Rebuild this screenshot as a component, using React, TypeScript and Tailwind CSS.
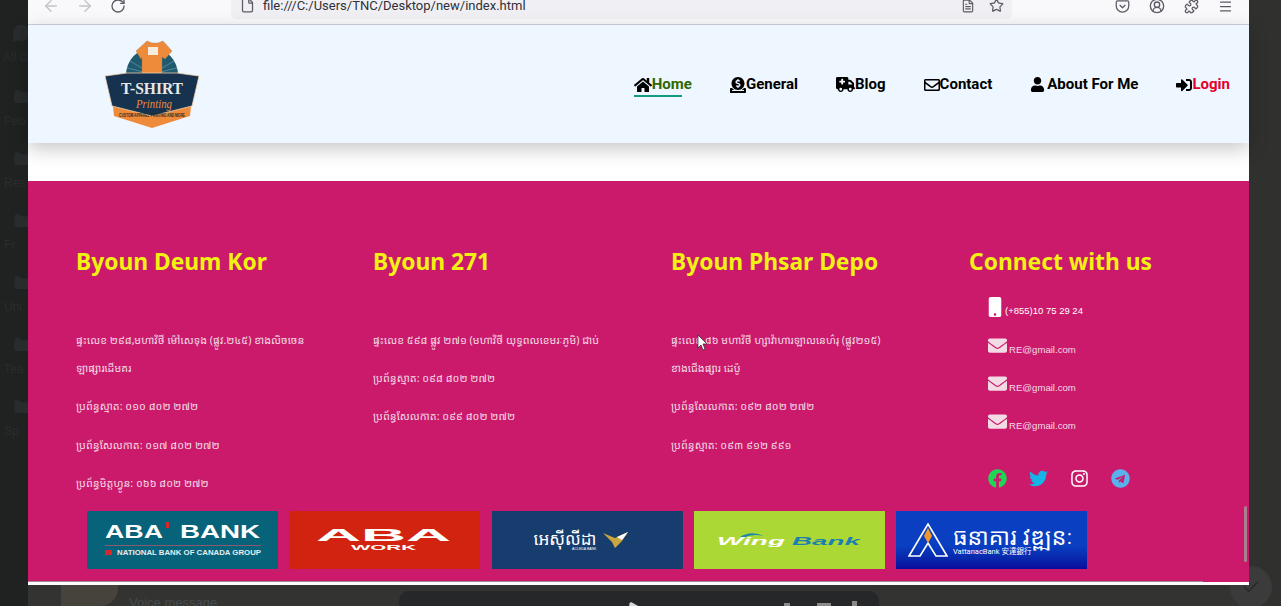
import React from "react";
import { ArrowLeft, ArrowRight, RotateCw, File, FileText, Star, Pocket, CircleUserRound, Puzzle, Menu, Folder, MessageCircle, Play, Check } from "lucide-react";
import { FaHome, FaDonate, FaRegEnvelope, FaUser, FaSignInAlt, FaMobile, FaEnvelope, FaFacebook, FaTwitter, FaInstagram, FaTelegram } from "react-icons/fa";
import { FaTruckMedical } from "react-icons/fa6";

const navItems = [
  { label: "General", icon: <FaDonate size={16} /> },
  { label: "Blog", icon: <FaTruckMedical size={19} /> },
  { label: "Contact", icon: <FaRegEnvelope size={16} /> },
  { label: "About For Me", icon: <FaUser size={15} className="mr-[2px]" /> },
];

const sideItems = ["Peo", "Res", "Fr", "Uni", "Tea", "Sp"];

const Logo = () => (
  <svg viewBox="0 0 96 90" className="w-[96px] h-[90px] shrink-0">
    <path d="M22 36 A26 27 0 0 1 74 36Z" fill="#1f5a6e" />
    <path d="M48 35 L26 22 M48 35 L23 29 M48 35 L70 22 M48 35 L73 29" stroke="#5d93a3" strokeWidth="0.8" />
    <path d="M32 12 L43 2 L48 4 L54 4 L59 2 L68 12 L61 20 L58 18 L58 35 L38 35 L38 18 L37 20Z" fill="#ee8b3a" stroke="#a87f5c" strokeWidth="0.4" />
    <rect x="44" y="8" width="10" height="8" fill="#f5ece0" />
    <path d="M9 67 L87 67 L86 77 L48 89 L10 77Z" fill="#ee8b3a" />
    <path d="M1 37 L23 34 L73 34 L95 37 L88 67 L48 77 L8 67Z" fill="#17324f" stroke="#f0cfa8" strokeWidth="0.8" />
    <text x="17" y="55" fontFamily="Liberation Serif" fontWeight="700" fontSize="17.5" fill="#e8e8e4" textLength="62" lengthAdjust="spacingAndGlyphs">T-SHIRT</text>
    <text x="32" y="69" fontFamily="Liberation Serif" fontStyle="italic" fontSize="13" fill="#ee8b3a" textLength="36" lengthAdjust="spacingAndGlyphs">Printing</text>
    <text x="15" y="77.5" fontFamily="Liberation Sans" fontWeight="700" fontSize="4.5" fill="#2b2a28" textLength="66" lengthAdjust="spacingAndGlyphs">CUSTOM APPAREL PRINTING AND MORE</text>
  </svg>
);

const FooterColumn = ({ title, lines }: { title: string; lines: string[] }) => (
  <div>
    <h3 className="font-['Noto_Sans','Open_Sans',sans-serif] font-bold text-[22.8px] leading-[32px] text-[#f2f212] mb-[48px]">{title}</h3>
    {lines.map((line) => (
      <p key={line} className="font-['Noto_Sans_Khmer','Khmer_OS','DejaVu_Sans',sans-serif] text-[10.8px] leading-[28.2px] mb-[10px] text-[#f3dbe6] whitespace-pre-line">
        {line}
      </p>
    ))}
  </div>
);

const App = () => {
  return (
    <div className="relative w-[1281px] h-[606px] overflow-hidden flex bg-[#30312e] font-['Liberation_Sans',sans-serif]">
      <aside className="w-[28px] h-[606px] shrink-0 bg-[#202222] overflow-hidden text-[#292c2c] text-[12px]">
        <div className="h-[71px] pt-[23px] pl-[11px]">
          <MessageCircle size={20} fill="#292c2c" strokeWidth={0} />
          <p className="-ml-[8px] mt-[5px] whitespace-nowrap">All chats</p>
        </div>
        {sideItems.map((item) => (
          <div key={item} className="h-[62px] pt-[17px] pl-[13px] whitespace-nowrap">
            <Folder size={18} fill="#292c2c" strokeWidth={0} />
            <p className="-ml-[9px] mt-[6px]">{item}</p>
          </div>
        ))}
      </aside>

      <div className="w-[1221px] h-[606px] shrink-0 flex flex-col">
        <div className="h-[25px] shrink-0 bg-[#f9f9fb] border-b border-[#cfcfd8] flex items-start overflow-hidden text-[#5b5b66]">
          <div className="flex items-center -mt-[3px] h-[18px] pl-[14px] gap-[16px]">
            <ArrowLeft size={18} className="text-[#c4c4c9]" />
            <ArrowRight size={18} className="text-[#c4c4c9]" />
            <RotateCw size={16} />
          </div>
          <div className="ml-[105px] -mt-[8px] w-[781px] h-[27px] shrink-0 rounded-[5px] bg-[#f0f0f4] flex items-center pl-[9px] pr-[8px] gap-[8px]">
            <File size={15} />
            <span className="font-['Roboto',sans-serif] text-[13px] text-[#2f2f38] ml-[0px]">file:///C:/Users/TNC/Desktop/new/index.html</span>
            <FileText size={14} className="ml-auto mr-[6px]" />
            <Star size={15} />
          </div>
          <div className="flex items-center -mt-[3px] h-[18px] ml-[103px] gap-[19px]">
            <Pocket size={15} />
            <CircleUserRound size={16} />
            <Puzzle size={15} />
            <Menu size={15} />
          </div>
        </div>

        <header className="h-[118px] shrink-0 bg-[#eef6ff] flex items-center pl-[76px] pr-[19px] shadow-[0_6px_18px_rgba(0,0,0,0.22)] relative">
          <Logo />
          <nav className="ml-auto mt-[1px] flex items-center gap-[38px] font-['Roboto',sans-serif] font-bold text-[15px] text-black">
            <a className="relative flex items-center text-[#2f6800]">
              <span className="text-black"><FaHome size={18} /></span>Home
              <span className="absolute left-0 top-[22px] w-[48px] h-[2px] bg-[#159a82]" />
            </a>
            {navItems.map((item) => (
              <a key={item.label} className="flex items-center">
                {item.icon}
                {item.label}
              </a>
            ))}
            <a className="flex items-center text-[#e4002b]">
              <span className="text-black"><FaSignInAlt size={16} /></span>Login
            </a>
          </nav>
        </header>

        <div className="h-[38px] shrink-0 bg-white" />

        <footer className="h-[401px] shrink-0 bg-[#cb1a6b] pt-[65px] relative z-10">
          <div className="h-[265px] pl-[48px] grid grid-cols-[297px_298px_298px_1fr]">
            <FooterColumn
              title="Byoun Deum Kor"
              lines={[
                "ផ្ទះលេខ ២៩៨,មហាវិថី ម៉ៅសេទុង (ផ្លូវ.២៤៥) ខាងលិចចេន\nឡាផ្សារដើមគរ",
                "ប្រព័ន្ធស្មាត: ០១០ ៨០២ ២៧២",
                "ប្រព័ន្ធសែលកាត: ០១៧ ៨០២ ២៧២",
                "ប្រព័ន្ធមិត្តហ្វូន: ០៦៦ ៨០២ ២៧២",
              ]}
            />
            <FooterColumn
              title="Byoun 271"
              lines={[
                "ផ្ទះលេខ ៥៩៨ ផ្លូវ ២៧១ (មហាវិថី យុទ្ធពលខេមរៈភូមិ) ជាប់",
                "ប្រព័ន្ធស្មាត: ០៩៨ ៨០២ ២៧២",
                "ប្រព័ន្ធសែលកាត: ០៩៩ ៨០២ ២៧២",
              ]}
            />
            <FooterColumn
              title="Byoun Phsar Depo"
              lines={[
                "ផ្ទះលេខ ៨៦ មហាវិថី ហ្សាវ៉ាហារឡាលនេហ៌រុ (ផ្លូវ២១៥)\nខាងជើងផ្សារ ដេប៉ូ",
                "ប្រព័ន្ធសែលកាត: ០៩២ ៨០២ ២៧២",
                "ប្រព័ន្ធស្មាត: ០៩៣ ៩១២ ៩៩១",
              ]}
            />
            <div>
              <h3 className="font-['Noto_Sans','Open_Sans',sans-serif] font-bold text-[22.8px] leading-[32px] text-[#f2f212] mb-[14px]">Connect with us</h3>
              <div className="pl-[19px] text-white">
                <div className="h-[38px] flex items-center text-[9.5px]">
                  <FaMobile size={20} className="-ml-[3px] -mt-[8px]" />
                  <span className="mt-[1px]">(+855)10 75 29 24</span>
                </div>
                {[0, 1, 2].map((i) => (
                  <div key={i} className="h-[38px] flex items-center gap-[2px] text-[9.6px] text-[#f3dbe6]">
                    <FaEnvelope size={19} className="-mt-[8px]" />
                    <span className="mt-[3px]">RE@gmail.com</span>
                  </div>
                ))}
                <div className="mt-[25px] flex items-center gap-[22px]">
                  <FaFacebook size={19} className="text-[#1fd655]" />
                  <FaTwitter size={19} className="text-[#14b4e6]" />
                  <FaInstagram size={19} />
                  <FaTelegram size={19} className="text-[#5ab1ee]" />
                </div>
              </div>
            </div>
          </div>

          <div className="pl-[59px] flex gap-[11.25px] h-[58px]">
            <div className="w-[191px] bg-[#07637a]">
              <svg viewBox="0 0 191 58" className="w-[191px] h-[58px]">
                <text x="18" y="27" fontFamily="Liberation Sans" fontWeight="700" fontSize="18" fill="#fff" textLength="58" lengthAdjust="spacingAndGlyphs">ABA</text>
                <rect x="79" y="11" width="3" height="6" fill="#d8262c" />
                <text x="93" y="27" fontFamily="Liberation Sans" fontWeight="700" fontSize="18" fill="#fff" textLength="80" lengthAdjust="spacingAndGlyphs">BANK</text>
                <rect x="18" y="34" width="156" height="1" fill="#8b5a70" />
                <rect x="18" y="39" width="7" height="5" fill="#d8262c" />
                <text x="30" y="44" fontFamily="Liberation Sans" fontWeight="700" fontSize="6.5" fill="#e8eef0" textLength="144" lengthAdjust="spacingAndGlyphs">NATIONAL BANK OF CANADA GROUP</text>
              </svg>
            </div>
            <div className="w-[191px] bg-[#d22310]">
              <svg viewBox="0 0 191 58" className="w-[191px] h-[58px]">
                <text x="27" y="30" fontFamily="Liberation Sans" fontWeight="700" fontSize="16.5" fill="#fff" textLength="135" lengthAdjust="spacingAndGlyphs">ABA</text>
                <text x="62" y="38.5" fontFamily="Liberation Sans" fontWeight="700" fontSize="7" fill="#fff" textLength="65" lengthAdjust="spacingAndGlyphs">WORK</text>
              </svg>
            </div>
            <div className="w-[191px] bg-[#173c6e] flex items-center pl-[42px] gap-[7px]">
              <span className="flex flex-col items-end text-white">
                <span className="font-['Noto_Sans_Khmer','DejaVu_Sans',sans-serif] text-[17px] leading-[17px] whitespace-nowrap">អេស៊ីលីដា</span>
                <span className="text-[3.5px] leading-[4px]">ACLEDA BANK</span>
              </span>
              <svg viewBox="0 0 26 16" className="w-[26px] h-[16px] shrink-0">
                <path d="M0 1 L12 6 L25 0 L19 9 L12 16 L9 10Z" fill="#c9a63e" />
                <path d="M14 5 L25 0 L19 8Z" fill="#fff" />
              </svg>
            </div>
            <div className="w-[191px] bg-[#acd836]">
              <svg viewBox="0 0 191 58" className="w-[191px] h-[58px]">
                <path d="M46 26 Q57 19 70 25 Q58 22 49 27Z" fill="#1b87a8" />
                <text x="23" y="34" fontFamily="Liberation Sans" fontStyle="italic" fontWeight="700" fontSize="11.5" fill="#fff" textLength="68" lengthAdjust="spacingAndGlyphs">Wing</text>
                <text x="98" y="34" fontFamily="Liberation Sans" fontStyle="italic" fontWeight="700" fontSize="11.5" fill="#1b80b0" textLength="68" lengthAdjust="spacingAndGlyphs">Bank</text>
              </svg>
            </div>
            <div className="w-[191px] bg-gradient-to-b from-[#0a3fc2] via-[#0a3fc2] via-60% to-[#0a0a9a] flex items-center pl-[12px] gap-[5px]">
              <svg viewBox="0 0 40 34" className="w-[40px] h-[34px] shrink-0">
                <path d="M20 1 L39 33 L28 33 L20 20 L12 33 L1 33Z" fill="none" stroke="#fff" strokeWidth="1.6" />
                <path d="M20 5 L24 13 L20 20 L16 13Z" fill="#f0982a" />
              </svg>
              <span className="flex flex-col text-white">
                <span className="font-['Noto_Sans_Khmer','DejaVu_Sans',sans-serif] text-[23px] leading-[24px] whitespace-nowrap">ធនាគារ វឌ្ឍនៈ</span>
                <span className="font-['Roboto','Noto_Sans_CJK_SC',sans-serif] text-[7.5px] leading-[8px] whitespace-nowrap">VattanacBank 安達銀行</span>
              </span>
            </div>
          </div>
        </footer>

        <div className="h-[3px] shrink-0 bg-white relative z-10" />

        <div className="flex-1 bg-[#333432] relative">
          <span className="absolute left-[33px] top-0 w-[57px] h-[21px] bg-[#46423c] rounded-br-[18px]" />
          <span className="absolute left-[101px] top-[8px] text-[13px] text-[#454a4c]">Voice message</span>
          <div className="absolute left-[371px] top-[6px] w-[480px] h-[20px] rounded-t-[10px] bg-[#262728] flex justify-center">
            <Play size={14} className="mt-[10px] ml-[-10px] text-[#d8d8d8]" fill="#d8d8d8" />
            <span className="absolute left-[385px] top-[12px] w-[6px] h-[6px] bg-[#8a8a8a]" />
            <span className="absolute left-[418px] top-[12px] w-[14px] h-[6px] bg-[#8a8a8a]" />
            <span className="absolute left-[453px] top-[10px] w-[5px] h-[8px] bg-[#8a8a8a]" />
          </div>
        </div>
      </div>

      <aside className="flex-1 relative">
        <span className="absolute left-[-19px] top-[566px] w-[42px] h-[42px] rounded-full bg-[#3b3b3b] flex items-center justify-center text-[#2a2a2a]">
          <Check size={20} />
        </span>
      </aside>

      {/* scrollbars and the mouse pointer lie on top of the page */}
      <span className="absolute z-20 left-[1244px] top-[506px] w-[3px] h-[56px] rounded-full bg-[#a9808f]" />
      <span className="absolute z-20 left-[28px] top-[581px] w-[1175px] h-[1px] bg-[#a08a94]" />
      <svg viewBox="0 0 12 17" className="absolute z-20 left-[697px] top-[334px] w-[12px] h-[17px]">
        <path d="M1 1 L1 14 L4 11 L6 16 L8 15 L6 10 L10 10Z" fill="#fff" stroke="#222" strokeWidth="0.7" />
      </svg>
    </div>
  );
};

export default App;
